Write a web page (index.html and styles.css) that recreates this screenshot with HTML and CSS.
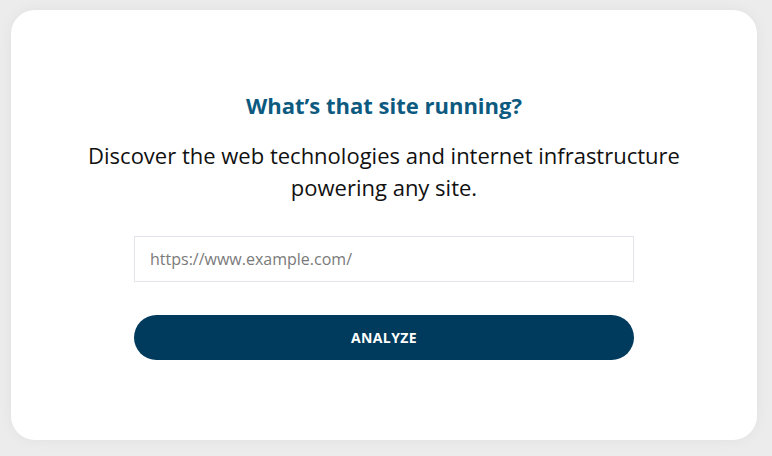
FILE: index.html
```html
<!DOCTYPE html>
<html lang="en">
<head>
<meta charset="utf-8">
<title>What's that site running?</title>
<link rel="stylesheet" href="styles.css">
</head>
<body>
<main class="card">
  <h1 class="title">What’s that site running?</h1>
  <p class="lead">Discover the web technologies and internet infrastructure powering any site.</p>
  <form class="form" onsubmit="return false">
    <input class="url" type="text" placeholder="https://www.example.com/">
    <button class="btn" type="submit">ANALYZE</button>
  </form>
</main>
</body>
</html>
```

FILE: styles.css
```css
html, body {
  margin: 0;
  padding: 0;
}
body {
  background: #ececec;
  font-family: "Open Sans", "Noto Sans", sans-serif;
  padding: 10px 15px 16px 11px;
  box-sizing: border-box;
  height: 456px;
}
.card {
  background: #ffffff;
  border-radius: 24px;
  height: 430px;
  box-sizing: border-box;
  padding: 80px 0 0;
  display: flex;
  flex-direction: column;
  align-items: center;
  box-shadow: 0 0 14px rgba(0,0,0,0.05);
}
.title {
  margin: 0;
  font-size: 22px;
  line-height: 30px;
  font-weight: 700;
  color: #0d5a80;
}
.lead {
  margin: 19px 0 0;
  width: 640px;
  text-align: center;
  font-size: 22px;
  line-height: 32px;
  color: #111;
}
.form {
  margin-top: 33px;
  width: 500px;
  display: flex;
  flex-direction: column;
  gap: 33px;
}
.url {
  height: 46px;
  box-sizing: border-box;
  border: 1px solid #e1e4ea;
  padding: 0 15px;
  font-family: inherit;
  font-size: 16px;
  color: #333;
  outline: none;
}
.url::placeholder {
  color: #7a7a7a;
}
.btn {
  height: 45px;
  border: 0;
  border-radius: 23px;
  background: #003a5c;
  color: #fff;
  font-family: inherit;
  font-weight: 700;
  font-size: 14px;
  letter-spacing: 0.4px;
}
```
